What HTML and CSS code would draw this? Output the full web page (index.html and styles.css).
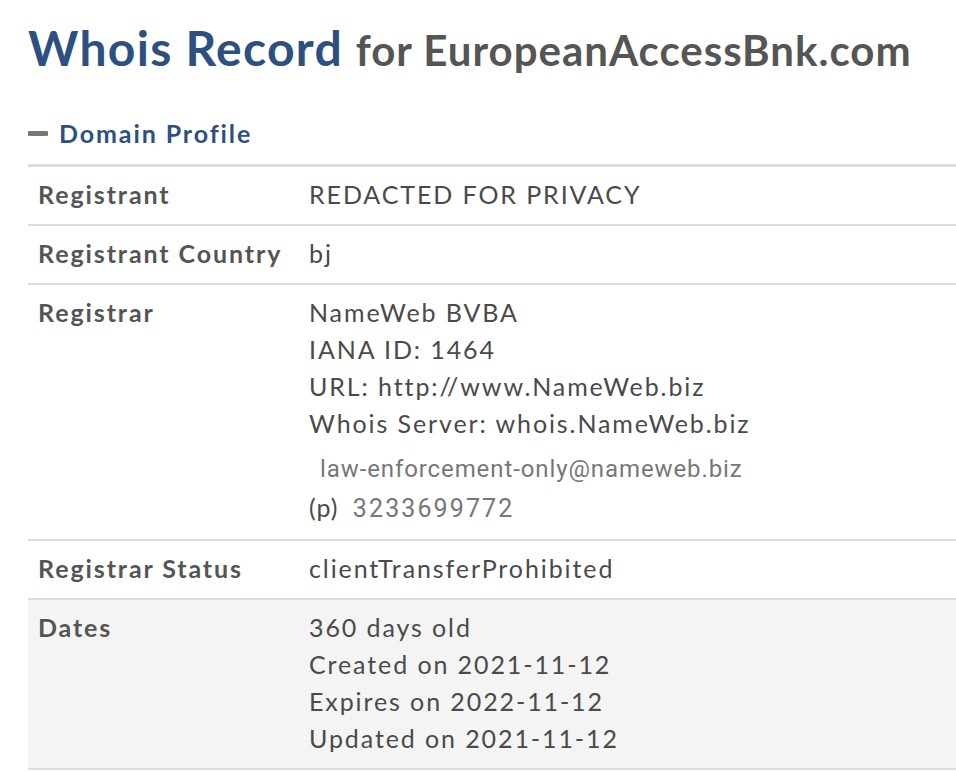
FILE: index.html
```html
<!DOCTYPE html>
<html>
<head>
<meta charset="utf-8">
<link rel="stylesheet" href="styles.css">
</head>
<body>
<div class="page">
  <h1 class="title"><span class="title-main">Whois Record</span> <span class="title-sub">for EuropeanAccessBnk.com</span></h1>
  <h2 class="section"><span class="dash"></span>Domain Profile</h2>
  <div class="table">
    <div class="row">
      <div class="label">Registrant</div>
      <div class="value">REDACTED FOR PRIVACY</div>
    </div>
    <div class="row">
      <div class="label">Registrant Country</div>
      <div class="value">bj</div>
    </div>
    <div class="row">
      <div class="label">Registrar</div>
      <div class="value">
        <div>NameWeb BVBA</div>
        <div>IANA ID: 1464</div>
        <div>URL: http://www.NameWeb.biz</div>
        <div>Whois Server: whois.NameWeb.biz</div>
        <div class="email">law-enforcement-only@nameweb.biz</div>
        <div class="phone-line">(p) <span class="phone">3233699772</span></div>
      </div>
    </div>
    <div class="row">
      <div class="label">Registrar Status</div>
      <div class="value">clientTransferProhibited</div>
    </div>
    <div class="row shaded">
      <div class="label">Dates</div>
      <div class="value">
        <div>360 days old</div>
        <div>Created on 2021-11-12</div>
        <div>Expires on 2022-11-12</div>
        <div>Updated on 2021-11-12</div>
      </div>
    </div>
  </div>
</div>
</body>
</html>
```
FILE: styles.css
```css
html, body {
  margin: 0;
  padding: 0;
  background: #fff;
}
body {
  font-family: Lato, "Liberation Sans", sans-serif;
  color: #4a4a4a;
  overflow: hidden;
}
.page {
  padding: 20px 0 0 28px;
}
.title {
  margin: 0;
  font-weight: 700;
  line-height: 56px;
  white-space: nowrap;
}
.title-main {
  font-size: 48px;
  letter-spacing: 1.3px;
  color: #2d5080;
}
.title-sub {
  font-size: 42px;
  letter-spacing: 1px;
  color: #555;
  margin-left: 5px;
}
.section {
  margin: 36px 0 0 0;
  font-size: 25px;
  font-weight: 700;
  color: #2d5080;
  letter-spacing: 1.9px;
  display: flex;
  align-items: center;
  gap: 11px;
  line-height: 30px;
}
.dash {
  display: inline-block;
  width: 20px;
  height: 5px;
  border-radius: 1px;
  background: #777;
}
.table {
  margin-top: 16px;
  border-top: 3px solid #ddd;
}
.row {
  display: grid;
  grid-template-columns: 271px 1fr;
  padding: 9px 10px 11px 10px;
  border-bottom: 2px solid #ddd;
  font-size: 25px;
  line-height: 37px;
  letter-spacing: 1.9px;
}
.row.shaded {
  background: #f4f4f4;
}
.label {
  font-weight: 700;
  color: #555;
}
.value {
  color: #4a4a4a;
}
.email {
  font-family: Roboto, "Liberation Sans", sans-serif;
  font-size: 24px;
  letter-spacing: 0.9px;
  color: #777;
  padding-left: 11px;
  padding-top: 9px;
}
.phone-line {
  line-height: 39px;
  letter-spacing: 1px;
}
.phone {
  font-family: Roboto, "Liberation Sans", sans-serif;
  letter-spacing: 2.1px;
  color: #777;
  margin-left: 7px;
}
```
